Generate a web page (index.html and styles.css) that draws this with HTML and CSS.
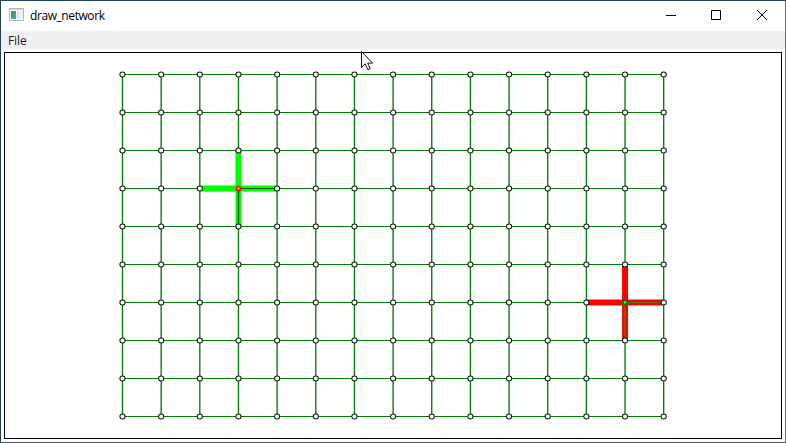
FILE: index.html
```html
<!DOCTYPE html>
<html lang="en">
<head>
<meta charset="utf-8">
<title>draw_network</title>
<link rel="stylesheet" href="styles.css">
</head>
<body>
<div class="window">
  <header class="titlebar">
    <svg class="app-icon" width="16" height="14" viewBox="0 0 16 14">
      <defs><linearGradient id="pane" x1="0" y1="0" x2="0.6" y2="1"><stop offset="0" stop-color="#4d7f9c"/><stop offset="1" stop-color="#52b079"/></linearGradient></defs>
      <path fill="#b3b8bd" d="M0 0h15v13H0z"/>
      <path fill="#d4d8dc" d="M1 1h13v1H1z"/>
      <path fill="#f5f7f8" d="M1 2h13v10H1z"/>
      <path fill="url(#pane)" d="M2 3h5v8H2z"/>
      <path fill="#dfe4e6" d="M8 3h3v8H8z"/>
      <path fill="#e3ebe7" d="M12 3h2v5h-2z"/>
    </svg>
    <span class="title">draw_network</span>
    <div class="controls">
      <svg width="46" height="30" viewBox="0 0 46 30"><path d="M20 14.5h10"/></svg>
      <svg width="46" height="30" viewBox="0 0 46 30"><path d="M19.5 9.5h9v9h-9z"/></svg>
      <svg width="46" height="30" viewBox="0 0 46 30"><path d="M19 9l10 10M29 9L19 19"/></svg>
    </div>
  </header>
  <nav class="menubar"><span>File</span></nav>
  <main class="canvas">
    <svg id="network" width="776" height="385" viewBox="5 53 776 385"></svg>
  </main>
</div>
<svg class="cursor" width="14" height="21" viewBox="0 0 14 21"><path d="M1.5 1.5v16l3.7-3.6 2.5 5.8 2.5-1.1-2.5-5.5h4.9z"/></svg>
<script src="script.js"></script>
</body>
</html>
```
FILE: styles.css
```css
* { box-sizing: border-box; }
html, body { margin: 0; height: 100%; overflow: hidden; }
body { background: #fff; font-family: "Open Sans", "Noto Sans", sans-serif; font-size: 12px; color: #000; }
.window {
  height: 443px;
  display: flex;
  flex-direction: column;
  border-style: solid;
  border-width: 1px;
  border-color: #24435e #6b6b6b #45545e #1f4058;
}
.titlebar { height: 30px; flex: none; display: flex; align-items: center; padding-left: 8px; }
.app-icon { margin-top: -2px; flex: none; }
.title { margin-left: 5px; line-height: 16px; letter-spacing: -0.42px; }
.controls { margin-left: auto; margin-right: 1px; display: flex; }
.controls svg { display: block; fill: none; stroke: #000; stroke-width: 1; }
.menubar { height: 18px; flex: none; background: #efefef; padding-left: 7px; line-height: 20px; letter-spacing: -0.1px; color: #222; }
.canvas { flex: 1; margin: 3px; border: 1px solid #000; overflow: hidden; }
.canvas svg { display: block; }
.horizontal { stroke: #008000; stroke-width: 1; }
.vertical { stroke: #008000; stroke-width: 1.36; }
.node { fill: #fff; stroke: #1c1c1c; stroke-width: 1.1; }
.wide { stroke-width: 6; }
.lime { stroke: #00ff00; }
.red { stroke: #ff0000; }
.thin-lime { stroke: #006000; }
.thin-red { stroke: #687000; }
.vertical.thin-red { stroke: #905000; stroke-width: 2; }
.center-lime { fill: #ffb0b0; stroke: #ff0000; stroke-width: 1.5; }
.center-red { fill: #90d090; stroke: #008000; stroke-width: 1.9; }
.cursor { position: absolute; left: 360px; top: 50px; fill: #fff; stroke: #101020; stroke-width: 1; }
```
FILE: script.js
```js
const NS = "http://www.w3.org/2000/svg";
const svg = document.getElementById("network");
const columns = 15, rows = 10;
const x = i => 122.5 + i * 38.657;
const y = j => 74.5 + j * 38;

function add(name, cls, attrs) {
  const el = document.createElementNS(NS, name);
  el.setAttribute("class", cls);
  for (const key in attrs) el.setAttribute(key, attrs[key]);
  svg.appendChild(el);
}
function line(cls, i1, j1, i2, j2) {
  add("line", cls, { x1: x(i1), y1: y(j1), x2: x(i2), y2: y(j2) });
}

for (let j = 0; j < rows; j++) line("horizontal", 0, j, columns - 1, j);
for (let i = 0; i < columns; i++) line("vertical", i, 0, i, rows - 1);

const marks = [{ i: 3, j: 3, color: "lime" }, { i: 13, j: 6, color: "red" }];
for (const { i, j, color } of marks) {
  line("wide " + color, i - 1, j, i + 1, j);
  line("wide " + color, i, j - 1, i, j + 1);
  line("horizontal thin-" + color, i, j, i + 1, j);
  line("vertical thin-" + color, i, j, i, j + 1);
}
for (let j = 0; j < rows; j++) {
  for (let i = 0; i < columns; i++) {
    const mark = marks.find(m => m.i === i && m.j === j);
    add("ellipse", mark ? "center-" + mark.color : "node",
      { cx: x(i), cy: y(j), rx: mark ? 2.1 : 2.6, ry: mark ? 2.1 : 2.5 });
  }
}
```
